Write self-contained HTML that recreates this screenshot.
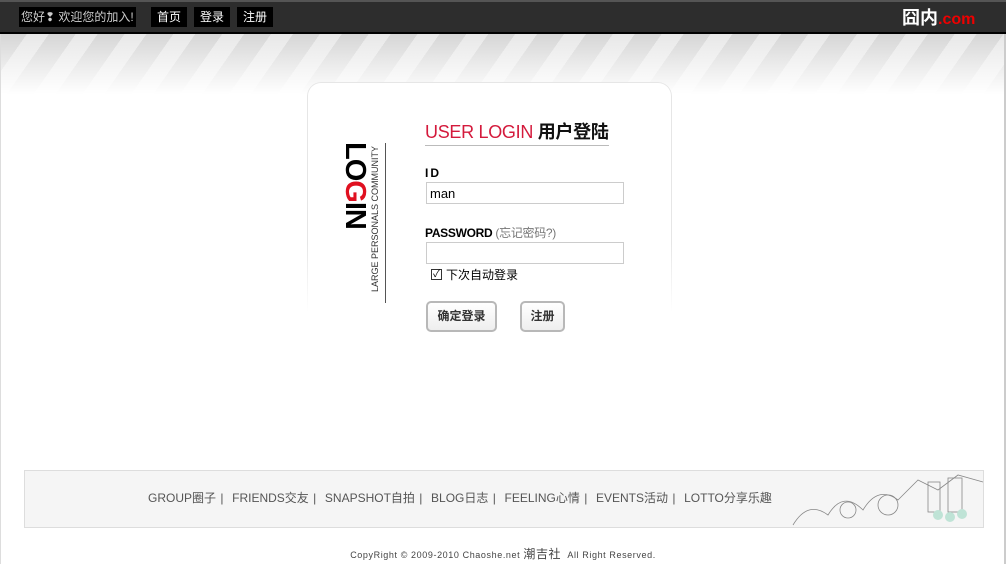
<!DOCTYPE html>
<html><head><meta charset="utf-8"><style>
*{margin:0;padding:0;box-sizing:border-box}
body{width:1006px;height:564px;background:#fff;position:relative;overflow:hidden;font-family:"Liberation Sans","Noto Sans CJK SC",sans-serif}
.top{position:absolute;left:0;top:0;width:1006px;height:34px;background:#2d2d2d;border-top:2px solid #555;border-bottom:2px solid #000}
.stripe{position:absolute;left:0;top:34px;width:1006px;height:60px;background:linear-gradient(to bottom,rgba(255,255,255,0),#fff),repeating-linear-gradient(125deg,#d6d6d6 0 22px,#e8e8e8 22px 40px)}
.lb{position:absolute;top:7px;height:20px;background:#000;color:#fff;font-size:12px;line-height:20px;padding:0 6px}
.side{position:absolute;top:34px;width:2px;height:530px;background:#ccc}
.card{position:absolute;left:307px;top:82px;width:365px;height:230px;border:1px solid #e6e6e6;border-bottom:none;border-radius:14px 14px 0 0;background:#fff;-webkit-mask:linear-gradient(#000 70%,transparent)}
.abs{position:absolute}
input{position:absolute;width:198px;height:22px;border:1px solid #ccc;font-size:13px;padding-left:3px;font-family:"Liberation Sans",sans-serif}
.btn{position:absolute;top:301px;height:31px;border:2px solid #b8b8b8;border-radius:5px;background:linear-gradient(#fff,#eee);font-size:12px;font-weight:bold;color:#333;text-align:center;line-height:27px}
.foot{position:absolute;left:24px;top:470px;width:960px;height:58px;background:#f5f5f5;border:1px solid #ddd;font-size:12px;color:#555;line-height:54px;padding-left:123px;word-spacing:1px;white-space:nowrap}
</style></head><body>
<div class="top"></div>
<div class="lb" style="left:19px;background:#000;color:#ccc;padding:0 2px">您好❢ 欢迎您的加入!</div>
<div class="lb" style="left:151px">首页</div>
<div class="lb" style="left:194px">登录</div>
<div class="lb" style="left:237px">注册</div>
<div class="abs" style="left:902px;top:7px;font-size:18px;font-weight:bold;color:#fff;line-height:22px">囧内<span style="color:#e00;font-size:16px">.com</span></div>
<div class="stripe"></div>
<div class="side" style="left:0;background:#ddd;width:1px"></div>
<div class="side" style="left:1004px"></div>
<div class="card"></div>
<div class="abs" style="left:366px;top:142px;width:0;height:0"><div style="transform-origin:0 0;transform:rotate(90deg);white-space:nowrap;font-size:29px;font-weight:900;line-height:22px;letter-spacing:-1px;font-family:'Liberation Sans',sans-serif">LO<span style="color:#e01020">G</span>IN</div></div>
<div class="abs" style="left:370px;top:292px;width:0;height:0"><div style="transform-origin:0 0;transform:rotate(-90deg);white-space:nowrap;font-size:9px;line-height:10px;color:#333">LARGE PERSONALS COMMUNITY</div></div>
<div class="abs" style="left:385px;top:143px;width:1px;height:160px;background:#555"></div>
<div class="abs" style="left:425px;top:118px;font-size:18px;color:#d41a3c;white-space:nowrap;letter-spacing:-0.3px">USER LOGIN <span style="color:#111;font-weight:bold">用户登陆</span></div>
<div class="abs" style="left:425px;top:145px;width:184px;height:1px;background:#bbb"></div>
<div class="abs" style="left:425px;top:166px;font-size:12px;font-weight:bold;letter-spacing:2px">ID</div>
<input style="left:426px;top:182px" value="man">
<div class="abs" style="left:425px;top:224px;font-size:12px;font-weight:bold;white-space:nowrap;letter-spacing:-0.3px">PASSWORD <span style="font-weight:normal;color:#777">(忘记密码?)</span></div>
<input style="left:426px;top:242px">
<div class="abs" style="left:431px;top:269px;width:11px;height:11px;border:1px solid #333;font-size:10px;line-height:9px;text-align:center">✓</div>
<div class="abs" style="left:446px;top:266px;font-size:12px">下次自动登录</div>
<div class="btn" style="left:426px;width:71px">确定登录</div>
<div class="btn" style="left:520px;width:45px">注册</div>
<div class="foot">GROUP圈子 | &nbsp;FRIENDS交友 | &nbsp;SNAPSHOT自拍 | &nbsp;BLOG日志 | &nbsp;FEELING心情 | &nbsp;EVENTS活动 | &nbsp;LOTTO分享乐趣</div>
<svg class="abs" style="left:788px;top:470px" width="196" height="58"><g fill="none" stroke="#888" stroke-width="0.8"><path d="M5 55 Q20 30 40 45 Q55 20 75 40 Q90 15 110 30 L130 10 L150 20 L170 5 L195 12"/><circle cx="60" cy="40" r="8"/><circle cx="100" cy="35" r="10"/><rect x="140" y="12" width="12" height="30"/><rect x="160" y="8" width="14" height="34"/></g><g fill="#bfe3d6"><circle cx="150" cy="45" r="5"/><circle cx="162" cy="47" r="5"/><circle cx="174" cy="44" r="5"/></g></svg>
<div class="abs" style="left:0;width:1006px;top:545px;text-align:center;font-size:9px;color:#444;letter-spacing:0.6px">CopyRight © 2009-2010 Chaoshe.net <span style="font-size:12px">潮吉社</span>&nbsp; All Right Reserved.</div>
</body></html>
